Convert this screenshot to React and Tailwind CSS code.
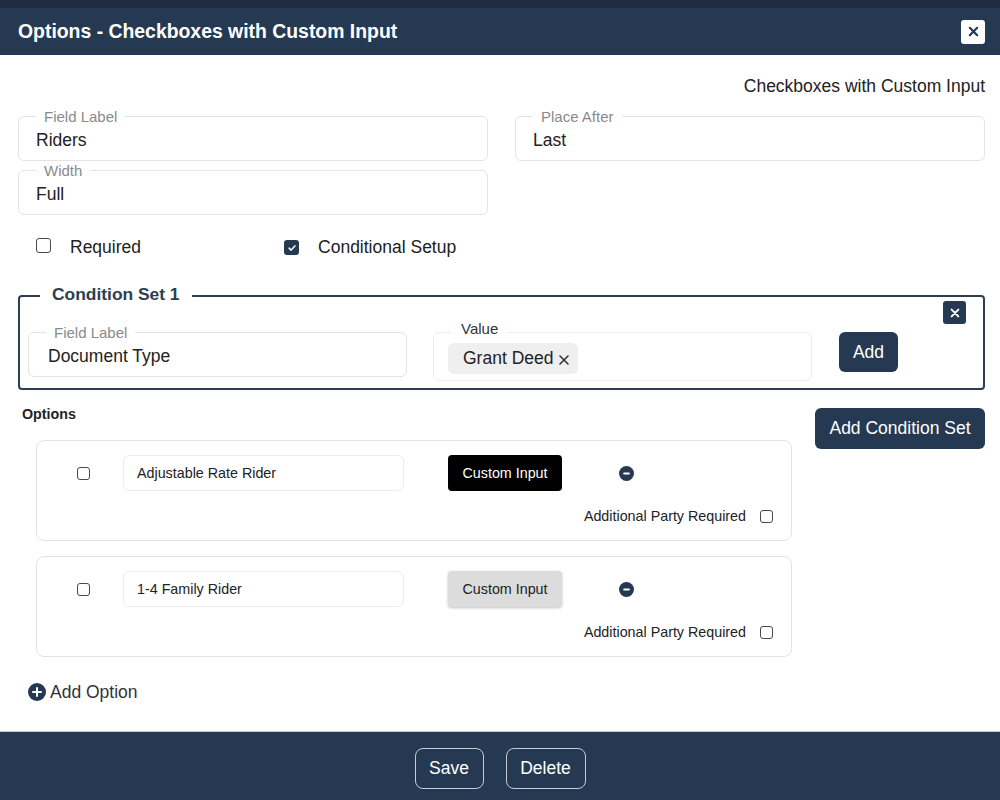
import React from "react";

const navy = "bg-[#253a52]";

const Box = ({ label, value, labelClass = "text-[#8a8a8a]", className = "" }) => (
  <div className={`relative flex items-center rounded-md border border-[#e4e4e4] px-[17px] ${className}`}>
    <span className={`absolute -top-[9px] left-[17px] bg-white px-2 text-[15px] leading-[17px] ${labelClass}`}>
      {label}
    </span>
    <span className="mt-[3px]">{value}</span>
  </div>
);

const Check = ({ checked, small }) => (
  <span
    className={`inline-flex shrink-0 items-center justify-center rounded-[3px] ${
      small ? "h-[13px] w-[13px]" : "h-[15px] w-[15px]"
    } ${checked ? "bg-[#253a52]" : "border-[1.5px] border-[#4a4a4a] bg-white"}`}
  >
    {checked && (
      <svg viewBox="0 0 12 12" className="h-[10px] w-[10px]">
        <path d="M2.5 6.2 L5 8.5 L9.5 3.5" fill="none" stroke="white" strokeWidth="1.8" strokeLinecap="round" strokeLinejoin="round" />
      </svg>
    )}
  </span>
);

const OptionCard = ({ name, active }) => (
  <div className="rounded-lg border border-[#e2e2e2] pl-[40px] pr-[18px] pt-[14px] pb-[16px]">
    <div className="flex items-center">
      <span className="flex w-[13px] justify-center">
        <Check small />
      </span>
      <div className="ml-[33px] flex h-[36px] w-[281px] items-center rounded-md border border-[#ececec] px-[13px] pt-[2px] text-[14.3px] text-[#222]">
        {name}
      </div>
      <button
        className={`ml-[44px] h-[36px] w-[114px] rounded-[4px] pt-[1px] text-[14.3px] ${
          active ? "bg-black text-white" : "bg-[#dcdcdc] text-[#222] shadow-[0_1px_3px_rgba(0,0,0,0.25)]"
        }`}
      >
        Custom Input
      </button>
      <svg viewBox="0 0 16 16" className="ml-[57px] h-[15px] w-[15px]">
        <circle cx="8" cy="8" r="8" fill="#253a52" />
        <rect x="4.5" y="7" width="7" height="2" rx="0.8" fill="white" />
      </svg>
    </div>
    <div className="mt-[17px] flex items-center justify-end gap-[14px] text-[14.3px] leading-4 text-[#222]">
      <span>Additional Party Required</span>
      <Check small />
    </div>
  </div>
);

export default function App() {
  return (
    <div className="flex h-screen flex-col bg-white font-['Liberation_Sans',Arial,sans-serif] text-[#222]">
      <div className="h-2 bg-[#1d2c3f]" />
      <div className={`flex h-[47px] items-center justify-between ${navy} pl-[18px] pr-[15px]`}>
        <h1 className="mt-[1px] text-[19.4px] font-bold text-white">Options - Checkboxes with Custom Input</h1>
        <button className="flex h-6 w-6 items-center justify-center rounded-[3px] bg-white">
          <svg viewBox="0 0 12 12" className="h-[11px] w-[11px]">
            <path d="M2 2 L10 10 M10 2 L2 10" stroke="#253a52" strokeWidth="2.4" strokeLinecap="round" />
          </svg>
        </button>
      </div>

      <div className="flex-1 pl-[18px] pr-[15px] pt-5 text-[17.5px]">
        <p className="mt-[1px] text-right leading-5">Checkboxes with Custom Input</p>

        <div className="mt-[20px] grid grid-cols-2 gap-x-[27px]">
          <Box label="Field Label" value="Riders" className="h-[45px]" />
          <Box label="Place After" value="Last" className="h-[45px]" />
          <Box label="Width" value="Full" className="mt-[9px] h-[45px]" />
        </div>

        <div className="mt-[22px] flex h-5 items-center">
          <span className="ml-[18px]"><Check /></span>
          <span className="ml-[19px]">Required</span>
          <span className="ml-[143px]"><Check checked /></span>
          <span className="ml-[19px]">Conditional Setup</span>
        </div>

        <div className="relative mt-[38px] rounded-[4px] border-2 border-[#2c3e50] pl-2 pr-[17px] pt-[35px] pb-[7px]">
          <span className="absolute -top-[13px] left-[20px] bg-white px-3 text-[17.4px] font-bold leading-5 text-[#2c3e50]">
            Condition Set 1
          </span>
          <button className="absolute top-[4px] right-[17px] flex h-[23px] w-[23px] items-center justify-center rounded-[3px] bg-[#253a52]">
            <svg viewBox="0 0 12 12" className="h-[10px] w-[10px]">
              <path d="M2 2 L10 10 M10 2 L2 10" stroke="white" strokeWidth="2.4" strokeLinecap="round" />
            </svg>
          </button>
          <div className="flex items-start">
            <Box label="Field Label" value="Document Type" className="h-[45px] w-[379px] px-[19px]" />
            <div className="relative ml-[26px] flex h-[49px] w-[379px] items-center rounded-md border border-[#ececec] px-[14px]">
              <span className="absolute -top-[13px] left-[17px] bg-white px-[10px] text-[15px] leading-[17px] text-[#333]">
                Value
              </span>
              <span className="mt-[4px] flex h-[31px] items-center gap-[5px] rounded-md bg-[#efefef] pl-[15px] pr-[8px]">
                Grant Deed
                <svg viewBox="0 0 12 12" className="mt-[3px] h-[12px] w-[12px]">
                  <path d="M2 2 L10 10 M10 2 L2 10" stroke="#333" strokeWidth="1.6" strokeLinecap="round" />
                </svg>
              </span>
            </div>
            <button className="ml-[27px] h-[40px] w-[59px] rounded-md bg-[#253a52] text-white">Add</button>
          </div>
        </div>

        <div className="mt-[16px] flex items-start justify-between">
          <div>
            <p className="pl-1 text-[14.3px] font-bold leading-4">Options</p>
            <div className="ml-[18px] mt-[18px] flex w-[756px] flex-col gap-[15px]">
              <OptionCard name="Adjustable Rate Rider" active />
              <OptionCard name="1-4 Family Rider" />
            </div>
          </div>
          <button className="mt-[2px] h-[41px] w-[170px] rounded-md bg-[#253a52] text-white">
            Add Condition Set
          </button>
        </div>

        <div className="ml-[10px] mt-[25px] flex items-center gap-[4px] leading-5 text-[#333]">
          <svg viewBox="0 0 18 18" className="h-[18px] w-[18px]">
            <circle cx="9" cy="9" r="9" fill="#253a52" />
            <path d="M9 5 V13 M5 9 H13" stroke="white" strokeWidth="2" strokeLinecap="round" />
          </svg>
          Add Option
        </div>
      </div>

      <div className={`flex h-[69px] items-start justify-center gap-[22px] border-t border-[#c8ccd2] ${navy} pt-[16px] text-[17.5px]`}>
        <button className="h-[41px] w-[69px] rounded-lg border border-[#c5ccd6] text-white">Save</button>
        <button className="h-[41px] w-[80px] rounded-lg border border-[#c5ccd6] text-white">Delete</button>
      </div>
    </div>
  );
}
